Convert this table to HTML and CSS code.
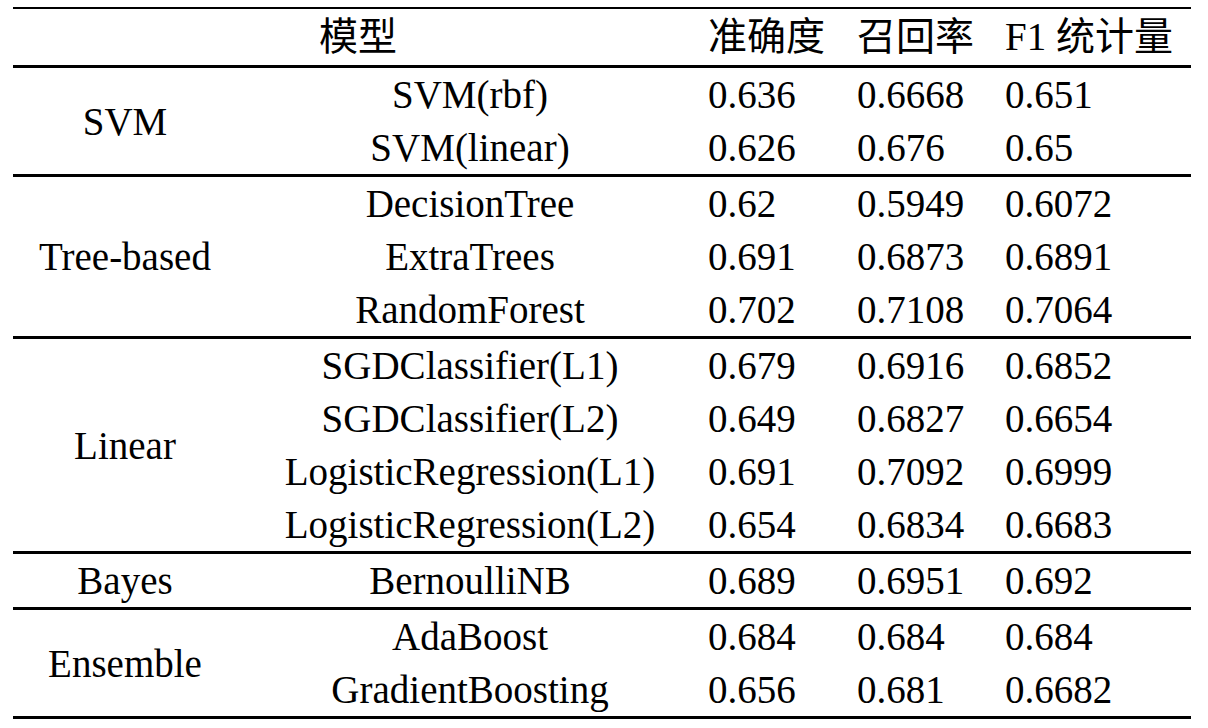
FILE: index.html
```html
<!DOCTYPE html>
<html lang="zh">
<head>
<meta charset="utf-8">
<title>模型对比</title>
<link rel="stylesheet" href="styles.css">
</head>
<body>
<div class="table">
  <div class="head">
    <div class="hcell model">模型</div>
    <div class="hcell num">准确度</div>
    <div class="hcell num">召回率</div>
    <div class="hcell num">F1 统计量</div>
  </div>

  <div class="group">
    <div class="glabel">SVM</div>
    <div class="rows">
      <div class="row"><div class="name">SVM(rbf)</div><div class="num">0.636</div><div class="num">0.6668</div><div class="num">0.651</div></div>
      <div class="row"><div class="name">SVM(linear)</div><div class="num">0.626</div><div class="num">0.676</div><div class="num">0.65</div></div>
    </div>
  </div>

  <div class="group">
    <div class="glabel">Tree-based</div>
    <div class="rows">
      <div class="row"><div class="name">DecisionTree</div><div class="num">0.62</div><div class="num">0.5949</div><div class="num">0.6072</div></div>
      <div class="row"><div class="name">ExtraTrees</div><div class="num">0.691</div><div class="num">0.6873</div><div class="num">0.6891</div></div>
      <div class="row"><div class="name">RandomForest</div><div class="num">0.702</div><div class="num">0.7108</div><div class="num">0.7064</div></div>
    </div>
  </div>

  <div class="group">
    <div class="glabel">Linear</div>
    <div class="rows">
      <div class="row"><div class="name">SGDClassifier(L1)</div><div class="num">0.679</div><div class="num">0.6916</div><div class="num">0.6852</div></div>
      <div class="row"><div class="name">SGDClassifier(L2)</div><div class="num">0.649</div><div class="num">0.6827</div><div class="num">0.6654</div></div>
      <div class="row"><div class="name">LogisticRegression(L1)</div><div class="num">0.691</div><div class="num">0.7092</div><div class="num">0.6999</div></div>
      <div class="row"><div class="name">LogisticRegression(L2)</div><div class="num">0.654</div><div class="num">0.6834</div><div class="num">0.6683</div></div>
    </div>
  </div>

  <div class="group">
    <div class="glabel">Bayes</div>
    <div class="rows">
      <div class="row"><div class="name">BernoulliNB</div><div class="num">0.689</div><div class="num">0.6951</div><div class="num">0.692</div></div>
    </div>
  </div>

  <div class="group last">
    <div class="glabel">Ensemble</div>
    <div class="rows">
      <div class="row"><div class="name">AdaBoost</div><div class="num">0.684</div><div class="num">0.684</div><div class="num">0.684</div></div>
      <div class="row"><div class="name">GradientBoosting</div><div class="num">0.656</div><div class="num">0.681</div><div class="num">0.6682</div></div>
    </div>
  </div>
</div>
</body>
</html>
```

FILE: styles.css
```css
html, body {
  margin: 0;
  padding: 0;
  background: #fff;
}

body {
  font-family: "Liberation Serif", "Times New Roman", "Noto Sans CJK SC", serif;
  font-size: 39px;
  color: #000;
}

.table {
  width: 1178px;
  margin: 7px 0 0 13px;
  border-top: 2px solid #000;
  border-bottom: 3px solid #000;
}

.head {
  display: grid;
  grid-template-columns: 690px 149px 148px 191px;
  height: 56px;
  align-items: center;
  font-family: "Liberation Serif", "Noto Sans CJK SC", serif;
  line-height: 56px;
}

.hcell.model {
  text-align: center;
}

.group {
  display: flex;
  border-top: 3px solid #000;
}

.glabel {
  width: 224px;
  flex: none;
  display: flex;
  align-items: center;
  justify-content: center;
}

.rows {
  flex: 1;
}

.row {
  display: grid;
  grid-template-columns: 466px 149px 148px 191px;
  height: 53px;
  line-height: 53px;
  align-items: center;
}

.name {
  text-align: center;
  white-space: nowrap;
}

.num {
  padding-left: 5px;
  white-space: nowrap;
}
```
